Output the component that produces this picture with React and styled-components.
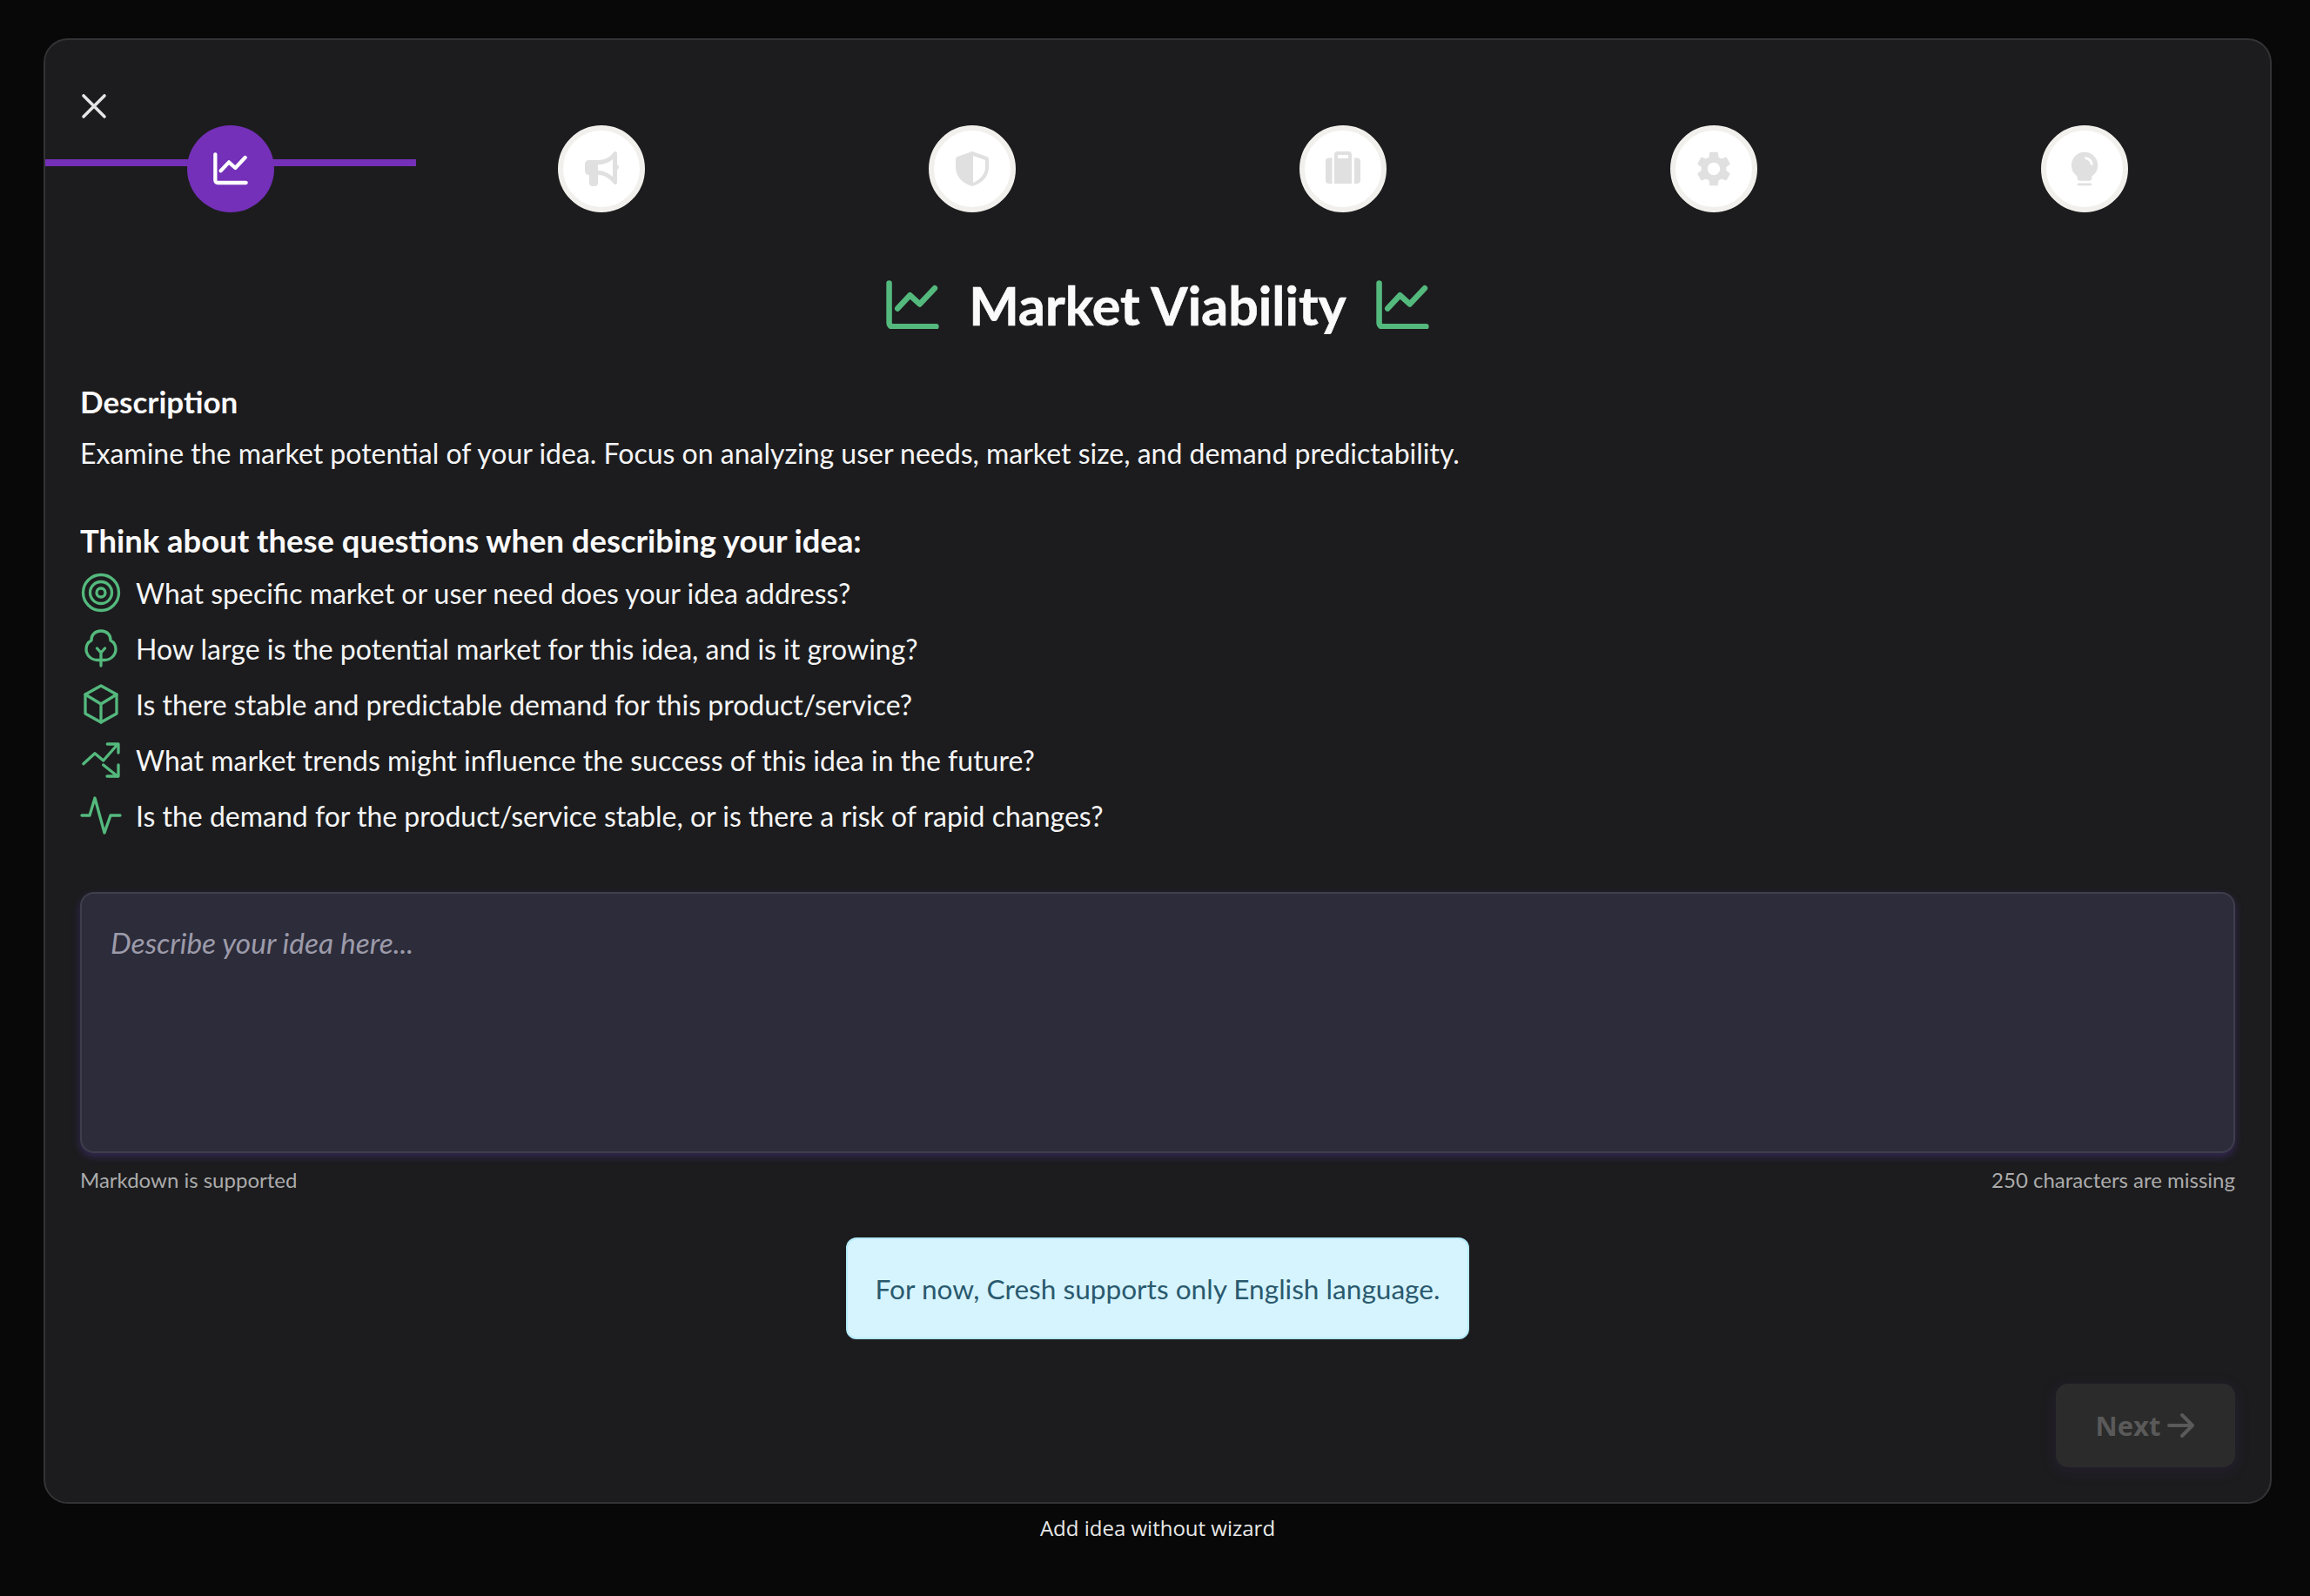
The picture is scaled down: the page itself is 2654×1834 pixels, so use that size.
import styled, { createGlobalStyle } from "styled-components";
import { PiLightbulbFill } from "react-icons/pi";
import { MdSettings } from "react-icons/md";

const GlobalStyle = createGlobalStyle`
  html, body { margin: 0; padding: 0; background: #080808; }
  * { box-sizing: border-box; }
`;

const GREEN = "#54b97d";

const ChartIcon = ({ width }) => (
  <svg width={width} height={(width * 56) / 60} viewBox="0 0 60 56" fill="none" stroke="currentColor" strokeWidth="6.4" strokeLinecap="round" strokeLinejoin="round">
    <path d="M3.5 3.5v45a4 4 0 0 0 4 4h49" />
    <path d="M13 32l14-15 11 10L55 9" />
  </svg>
);

const CloseIcon = () => (
  <svg width="32" height="32" viewBox="0 0 32 32" fill="none" stroke="currentColor" strokeWidth="3.6" strokeLinecap="round">
    <path d="M4 4l24 24M28 4L4 28" />
  </svg>
);

const ArrowIcon = () => (
  <svg width="32" height="30" viewBox="0 0 32 30" fill="none" stroke="currentColor" strokeWidth="4" strokeLinecap="round" strokeLinejoin="round">
    <path d="M2 15h27M17 3l12 12-12 12" />
  </svg>
);

// step icons share an 80 unit grid centered in the circle
const StepSvg = ({ children }) => (
  <svg width="80" height="80" viewBox="0 0 80 80" fill="currentColor" fillRule="evenodd">
    {children}
  </svg>
);

const MegaphoneIcon = () => (
  <StepSvg>
    <path d="M26 30H36C43 30 50 27 54 21Q58 18 58 23V35Q62 38 58 41V55Q58 60 54 57C50 52 44 47 36 47V56Q36 60 32 60H30Q26 60 26 56V47Q21 47 21 42V35Q21 30 26 30ZM36 35V42C43 42 48 45 53 49V29C48 33 43 35 36 35Z" />
  </StepSvg>
);

const ShieldIcon = () => (
  <StepSvg>
    <path d="M40 20L57 26Q59 27 59 29V38C59 50 50 57 40 60C30 57 21 50 21 38V29Q21 27 23 26ZM41 25V56C48 53 55 47 55 38V30Z" />
  </StepSvg>
);

const SuitcaseIcon = () => (
  <StepSvg>
    <path d="M27.5 27.5V57H24Q20 57 20 53V31Q20 27.5 24 27.5Z" />
    <path d="M34 20H46Q50 20 50 24V57H30V24Q30 20 34 20ZM34 24V28H46V24Z" />
    <path d="M53 27.5H56Q60 27.5 60 31V53Q60 57 56 57H53Z" />
  </StepSvg>
);

const GearIcon = () => <MdSettings size={48} />;

const BulbIcon = () => <PiLightbulbFill size={44} />;

// list icons use a 48 unit grid
const ListSvg = ({ children, fill = "none" }) => (
  <svg width="48" height="48" viewBox="0 0 48 48" fill={fill} stroke="currentColor" strokeWidth="3.3" strokeLinecap="round" strokeLinejoin="round">
    {children}
  </svg>
);

const TargetIcon = () => (
  <ListSvg>
    <circle cx="24" cy="24" r="20.5" />
    <circle cx="24" cy="24" r="12.5" />
    <circle cx="24" cy="24" r="5" />
  </ListSvg>
);

const TreeIcon = () => (
  <svg width="48" height="48" viewBox="7 3 48 48" fill="none" stroke="currentColor" strokeWidth="3.3" strokeLinecap="round" strokeLinejoin="round">
    <path d="M31 7C24 7 19.5 12 20 18C16 20 14 24 14 28C14 35 20 40.5 27 40.5H35C42 40.5 48 35 48 28C48 24 46 20 42 18C42.5 12 38 7 31 7Z" />
    <path d="M31 47V31M26.5 27L31 32M35.5 27L31 32" />
  </svg>
);

const CubeIcon = () => (
  <ListSvg>
    <path d="M24 3L42 13V35L24 45L6 35V13Z" />
    <path d="M6 13L24 24L42 13M24 24V45" />
  </ListSvg>
);

const TrendsIcon = () => (
  <ListSvg>
    <path d="M3.8 28.7L17 16.7L26.7 25L43 6.5" />
    <path d="M31.3 6H44V16" />
    <path d="M26.7 30L43 43" />
    <path d="M44 30V43H31" />
  </ListSvg>
);

const PulseIcon = () => (
  <ListSvg>
    <path d="M2 24H11L17 4L28 44L35 24H46" />
  </ListSvg>
);

const steps = [
  { key: "market", icon: <ChartIcon width={40} />, active: true },
  { key: "promo", icon: <MegaphoneIcon /> },
  { key: "shield", icon: <ShieldIcon /> },
  { key: "case", icon: <SuitcaseIcon /> },
  { key: "gear", icon: <GearIcon /> },
  { key: "bulb", icon: <BulbIcon /> },
];

const questions = [
  { icon: <TargetIcon />, text: "What specific market or user need does your idea address?" },
  { icon: <TreeIcon />, text: "How large is the potential market for this idea, and is it growing?" },
  { icon: <CubeIcon />, text: "Is there stable and predictable demand for this product/service?" },
  { icon: <TrendsIcon />, text: "What market trends might influence the success of this idea in the future?" },
  { icon: <PulseIcon />, text: "Is the demand for the product/service stable, or is there a risk of rapid changes?" },
];

const App = () => (
  <Page>
    <GlobalStyle />
    <Card>
      <CloseButton aria-label="Close">
        <CloseIcon />
      </CloseButton>

      <Stepper>
        {steps.map((step) => (
          <Step key={step.key} $active={step.active}>
            <StepCircle $active={step.active}>{step.icon}</StepCircle>
          </Step>
        ))}
      </Stepper>

      <Title>
        <TitleIcon>
          <ChartIcon width={61} />
        </TitleIcon>
        <span>Market Viability</span>
        <TitleIcon>
          <ChartIcon width={61} />
        </TitleIcon>
      </Title>

      <Content>
        <SectionLabel>Description</SectionLabel>
        <Body>
          Examine the market potential of your idea. Focus on analyzing user needs, market size, and demand predictability.
        </Body>

        <QuestionsLabel>Think about these questions when describing your idea:</QuestionsLabel>
        <Questions>
          {questions.map((q) => (
            <Question key={q.text}>
              <QuestionIcon>{q.icon}</QuestionIcon>
              <span>{q.text}</span>
            </Question>
          ))}
        </Questions>

        <IdeaInput placeholder="Describe your idea here..." />
        <Hints>
          <span>Markdown is supported</span>
          <span>250 characters are missing</span>
        </Hints>

        <AlertRow>
          <Alert>For now, Cresh supports only English language.</Alert>
        </AlertRow>

        <Footer>
          <NextButton disabled>
            Next
            <ArrowIcon />
          </NextButton>
        </Footer>
      </Content>
    </Card>
    <SkipLink>Add idea without wizard</SkipLink>
  </Page>
);

const Page = styled.div`
  min-height: 1834px;
  padding: 44px 44px 0 50px;
  background: #080808;
`;

const Card = styled.div`
  position: relative;
  height: 1684px;
  padding-top: 98px;
  background: #1c1c1e;
  border: 2px solid #333336;
  border-radius: 28px;
`;

const CloseButton = styled.button`
  position: absolute;
  top: 60px;
  left: 40px;
  width: 32px;
  height: 32px;
  padding: 0;
  display: flex;
  align-items: center;
  justify-content: center;
  background: none;
  border: none;
  color: #e6e6e6;
`;

const Stepper = styled.div`
  display: flex;
`;

const Step = styled.div`
  position: relative;
  flex: 1;
  display: flex;
  justify-content: center;
  &::before {
    content: "";
    display: ${(p) => (p.$active ? "block" : "none")};
    position: absolute;
    left: 0;
    right: 0;
    top: 39px;
    height: 8px;
    background: #7430b8;
  }
`;

const StepCircle = styled.div`
  position: relative;
  width: 100px;
  height: 100px;
  border-radius: 50%;
  display: flex;
  align-items: center;
  justify-content: center;
  background: ${(p) => (p.$active ? "#7430b8" : "#ffffff")};
  border: ${(p) => (p.$active ? "none" : "6px solid #f1f0ec")};
  color: ${(p) => (p.$active ? "#ffffff" : "#e0e0e0")};
`;

const Title = styled.h1`
  margin: 70px 0 0;
  height: 72px;
  display: flex;
  align-items: center;
  justify-content: center;
  gap: 34px;
  font-family: "Lato", sans-serif;
  font-size: 61px;
  font-weight: 700;
  -webkit-text-stroke: 0.6px #fafafa;
  color: #fafafa;
`;

const TitleIcon = styled.span`
  display: flex;
  color: ${GREEN};
`;

const Content = styled.div`
  padding: 53px 40px 0;
`;

const SectionLabel = styled.div`
  height: 44px;
  line-height: 44px;
  font-family: "Lato", sans-serif;
  font-size: 35px;
  font-weight: 700;
  color: #fafafa;
`;

const Body = styled.div`
  margin-top: 16px;
  height: 44px;
  line-height: 44px;
  font-family: "Lato", sans-serif;
  font-size: 32px;
  color: #f5f5f5;
`;

const QuestionsLabel = styled(SectionLabel)`
  margin-top: 56px;
  font-size: 36.4px;
`;

const Questions = styled.div`
  margin-top: 6px;
`;

const Question = styled.div`
  height: 64px;
  display: flex;
  align-items: center;
  gap: 16px;
  font-family: "Lato", sans-serif;
  font-size: 32px;
  color: #f5f5f5;
`;

const QuestionIcon = styled.span`
  width: 48px;
  flex: none;
  display: flex;
  justify-content: center;
  color: ${GREEN};
`;

const IdeaInput = styled.textarea`
  display: block;
  width: 100%;
  height: 300px;
  margin-top: 56px;
  padding: 36px 33px;
  resize: none;
  background: #2d2c3a;
  border: 2px solid #3e3e4c;
  border-radius: 16px;
  box-shadow: 0 4px 10px rgba(90, 60, 170, 0.4);
  font-family: "Lato", sans-serif;
  font-size: 33.5px;
  &::placeholder {
    color: #9c9baa;
    font-style: italic;
    opacity: 1;
  }
`;

const Hints = styled.div`
  margin-top: 16px;
  height: 30px;
  line-height: 30px;
  display: flex;
  justify-content: space-between;
  font-family: "Lato", sans-serif;
  font-size: 24px;
  color: #ababab;
`;

const AlertRow = styled.div`
  margin-top: 51px;
  display: flex;
  justify-content: center;
`;

const Alert = styled.div`
  width: 716px;
  height: 117px;
  display: flex;
  align-items: center;
  justify-content: center;
  background: #d6f4fe;
  border: 2px solid #b5ebfc;
  border-radius: 12px;
  font-family: "Lato", sans-serif;
  font-size: 31.6px;
  color: #2a5a6e;
`;

const Footer = styled.div`
  margin-top: 51px;
  display: flex;
  justify-content: flex-end;
`;

const NextButton = styled.button`
  width: 206px;
  height: 96px;
  display: flex;
  align-items: center;
  justify-content: center;
  gap: 8px;
  background: #2b2b2b;
  border: none;
  border-radius: 14px;
  box-shadow: 0 4px 18px rgba(90, 50, 150, 0.16);
  font-family: "Open Sans", sans-serif;
  font-size: 31px;
  font-weight: 700;
  color: #5a5a5a;
`;

const SkipLink = styled.div`
  margin-top: 13px;
  text-align: center;
  font-family: "Open Sans", sans-serif;
  font-size: 24px;
  line-height: 30px;
  color: #e8e8e8;
`;

export default App;
